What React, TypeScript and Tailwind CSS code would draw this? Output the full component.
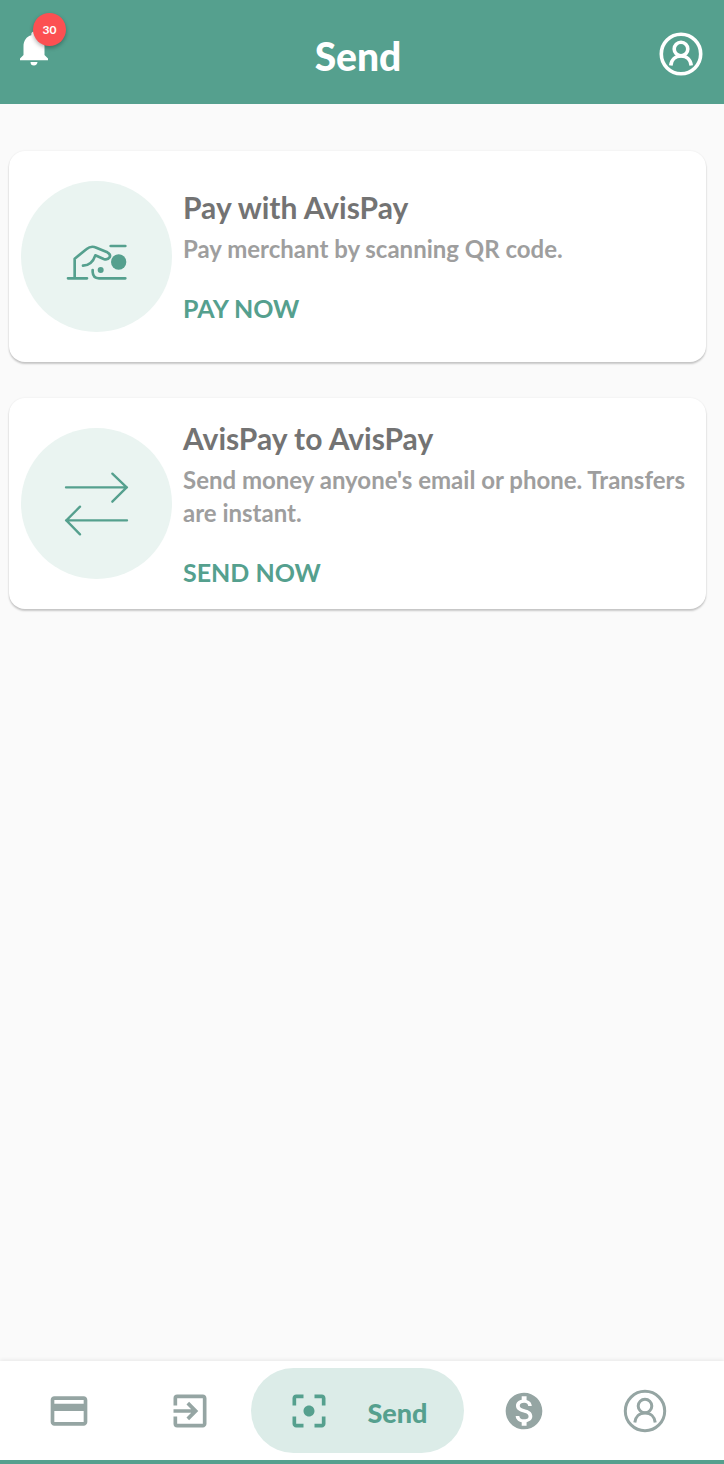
import type { ReactNode } from "react";
import {
  MdExitToApp,
  MdFilterCenterFocus,
  MdMonetizationOn,
  MdNotifications,
  MdPayment,
} from "react-icons/md";

function PersonIcon({ strokeWidth }: { strokeWidth: number }) {
  return (
    <svg
      viewBox="0 0 44 44"
      className="size-11"
      fill="none"
      stroke="currentColor"
      strokeWidth={strokeWidth}
      aria-hidden="true"
    >
      <circle cx="22" cy="22" r="19.700" />
      <circle cx="22" cy="17" r="6.800" />
      <path d="M11.800 33.500C12.400 27.600 16.400 24 22 24s9.600 3.600 10.200 9.500" />
    </svg>
  );
}

function HandCashIcon() {
  return (
    <svg
      viewBox="0 0 249 156"
      className="h-[52px] w-[83px]"
      fill="none"
      stroke="currentColor"
      strokeWidth="8"
      strokeLinecap="round"
      strokeLinejoin="round"
      aria-hidden="true"
    >
      <path d="M39 142H96M59 142V83L95 54Q108 43 124 50L157 64Q168 70 164 79Q158 88 146 84L121 73Q111 103 84 104" />
      <path d="M167 45H211M113 117V123Q114 142 132 142H211" />
      <circle cx="137" cy="117" r="9" fill="currentColor" stroke="none" />
      <circle cx="191" cy="93" r="23" fill="currentColor" stroke="none" />
    </svg>
  );
}

function TransferIcon() {
  return (
    <svg
      viewBox="188 255 201 204"
      className="h-[68px] w-[67px]"
      fill="none"
      stroke="currentColor"
      strokeWidth="7"
      strokeLinecap="round"
      strokeLinejoin="round"
      aria-hidden="true"
    >
      <path d="M197 307H380M336 266L379 307L336 350" />
      <path d="M380 406H197M239 365L198 406L239 448" />
    </svg>
  );
}

function ActionCard(props: {
  icon: ReactNode;
  title: string;
  text: string;
  action: string;
}) {
  return (
    <section className="flex min-h-[211px] items-center gap-[11px] rounded-[16px] bg-white py-5 pl-3 shadow-[0_2px_2px_rgba(0,0,0,0.2),0_0_2px_rgba(0,0,0,0.08)]">
      <div className="flex size-[151px] shrink-0 items-center justify-center rounded-full bg-[#eaf4f1] text-[#55a08e]">
        {props.icon}
      </div>
      <div className="min-w-0 flex-1">
        <h2 className="text-[30px] leading-9 text-[#737373]">{props.title}</h2>
        <p className="mt-[7px] text-[24px] leading-[33px] text-[#9e9e9e]">{props.text}</p>
        <button type="button" className="mt-[27px] block text-[25px] leading-8 text-[#55a08e]">
          {props.action}
        </button>
      </div>
    </section>
  );
}

function NavItem({ label, children }: { label: string; children: ReactNode }) {
  return (
    <button type="button" aria-label={label} className="flex h-full flex-1 items-center justify-center">
      {children}
    </button>
  );
}

export default function App() {
  return (
    <div className="flex min-h-screen flex-col bg-[#fafafa] font-['Lato',sans-serif] font-bold">
      <header className="grid h-[104px] grid-cols-[1fr_auto_1fr] items-center bg-[#55a08e] pr-[21px] pl-[13px] text-white">
        <button type="button" aria-label="Notifications, 30 unread" className="relative -mt-2 justify-self-start">
          <MdNotifications className="size-[42px]" />
          <span className="absolute -top-[14px] left-5 flex size-[33px] items-center justify-center rounded-full bg-[#fc5052] text-[12px] shadow-[0_2px_4px_rgba(0,0,0,0.3)]">
            30
          </span>
        </button>
        <h1 className="pt-2 text-[39px] leading-[48px] font-black">Send</h1>
        <button type="button" aria-label="Profile" className="mt-1 justify-self-end">
          <PersonIcon strokeWidth={3.600} />
        </button>
      </header>

      <main className="flex flex-1 flex-col gap-9 pt-[47px] pr-[18px] pb-9 pl-[9px]">
        <ActionCard
          icon={<HandCashIcon />}
          title="Pay with AvisPay"
          text="Pay merchant by scanning QR code."
          action="PAY NOW"
        />
        <ActionCard
          icon={<TransferIcon />}
          title="AvisPay to AvisPay"
          text="Send money anyone's email or phone. Transfers are instant."
          action="SEND NOW"
        />
      </main>

      <nav className="flex h-[103px] items-center border-b-4 border-[#55a08e] bg-white pr-[19px] pl-[9px] text-[#95a5a3] shadow-[0_-1px_4px_rgba(0,0,0,0.08)]">
        <NavItem label="Cards">
          <MdPayment className="size-11" />
        </NavItem>
        <NavItem label="Request">
          <MdExitToApp className="size-11" />
        </NavItem>
        <button
          type="button"
          aria-current="page"
          className="flex h-[85px] w-[213px] items-center justify-between rounded-full bg-[#dcece8] px-9 text-[#55a08e]"
        >
          <MdFilterCenterFocus className="size-11" />
          <span className="pt-1 text-[27px] leading-8 font-black">Send</span>
        </button>
        <NavItem label="Money">
          <MdMonetizationOn className="size-11" />
        </NavItem>
        <NavItem label="Account">
          <PersonIcon strokeWidth={3} />
        </NavItem>
      </nav>
    </div>
  );
}
